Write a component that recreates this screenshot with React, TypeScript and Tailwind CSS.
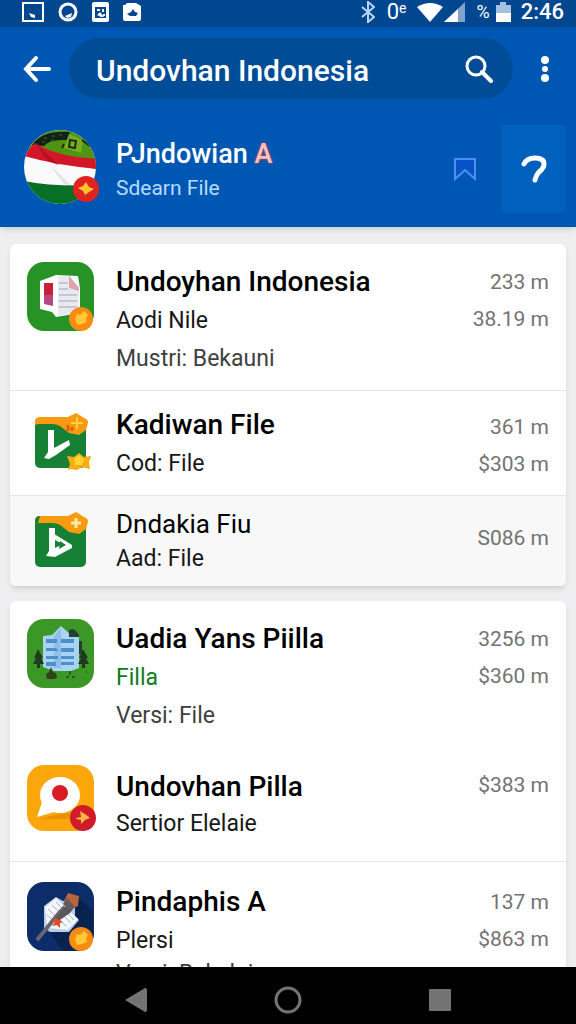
import type { ReactNode } from "react";
import clsx from "clsx";

interface FileRow {
  title: string;
  lines: string[];
  amounts: string[];
  icon: ReactNode;
  className: string;
  iconClassName?: string;
  bodyClassName?: string;
  titleClassName?: string;
  amountsClassName?: string;
  accent?: boolean;
}

const Coin = () => (
  <g>
    <circle cx="54" cy="57" r="12" fill="#f98a12" />
    <path d="M48 57l2-5 3 1 4-4 4 4-2 3 1 4-5 2-5 1z" fill="#ffc935" />
  </g>
);

const DocumentIcon = () => (
  <svg width="68" height="70" viewBox="0 0 68 70" aria-hidden="true">
    <rect width="67" height="69" rx="17" fill="#279327" />
    <path d="M13 19l16-6 22 1 2 12v25l-24 4-4-5-12-3z" fill="#fff" />
    <path d="M17 21h9v23l-9-2z" fill="#b54a80" />
    <path d="M17 21h9v12h-9z" fill="#c9213b" />
    <path d="M31 14h12l9 11v26l-21 3z" fill="#e9e9f0" />
    <path d="M42 14l10 12v3l-10-3z" fill="#dba4ac" />
    <path d="M32 21h9M32 27h9M32 33h18M32 39h18M32 45h18" stroke="#c4c6d4" strokeWidth="2" />
    <Coin />
  </svg>
);

const FolderIcon = ({ closed }: { closed?: boolean }) => (
  <svg width="66" height="62" viewBox="0 0 66 62" aria-hidden="true">
    <rect x="8" y="5" width="51" height="50" rx="5" fill="#168034" />
    <path d="M8 12V9q0-5 5-5h28l8-4 8 5q4 1 4 5l-2 7-7 5-10-2-9-7q-3-2-8-2H11z" fill="#f99b10" />
    {closed ? (
      <>
        <path d="M8 12V9q0-5 5-5l-2 7z" fill="#168034" />
        <path d="M22 16h6v20l8-4-8-4-4-8 21 13v3L28 45l-9-1 3-5z" fill="#fff" />
        <path d="M33 29l6 4-7 4z" fill="#168034" />
        <path d="M49 6v10M44 11h10" stroke="#ffe9a8" strokeWidth="3" />
      </>
    ) : (
      <>
        <path d="M21 17h6v18l15-8 1 5-14 10-7 4-5-1 4-6z" fill="#fff" />
        <path d="M50 4v12M44 10h12" stroke="#ffd044" strokeWidth="2" />
        <path d="M41 12v6M45 14v4" stroke="#dc6210" strokeWidth="3" />
        <path d="M40 43l7 1 5-4 5 4 7-1-2 6 1 7-8-2-5 3-6-1-3 1 2-6z" fill="#f9ac13" />
        <path d="M47 46l5-4 5 5-2 5h-7z" fill="#ffd52f" />
      </>
    )}
  </svg>
);

const BuildingIcon = () => (
  <svg width="68" height="70" viewBox="0 0 68 70" aria-hidden="true">
    <rect width="67" height="69" rx="17" fill="#3b9827" />
    <path d="M16 17l9-1 9-9 10 9 8 1v32l-8 3H27l-11-4z" fill="#a9d3f2" />
    <path d="M27 17l7-8v40h-7z" fill="#8dbfe8" />
    <path
      d="M19 20h11v4H19zM34 20h13v4H34zM19 29h10l3 3H19zM34 29h13v4H34zM19 37h12v3H19zM34 37h13v3H34zM19 43h10v4H19zM34 43h13v3H34z"
      fill="#4d8fcb"
    />
    <path d="M42 11l4-1 3 2 3 4v2H42zM52 22h3v13h-3z" fill="#243f31" />
    <path
      d="M11 30l-4 9h2l-3 6h4v4h3v-4h4l-3-6h2zM56 30l-4 9h2l-3 6h4v4h3v-4h4l-3-6h2z"
      fill="#203a1d"
    />
    <path d="M24 48l2 5 3 1 1 5-3 1h-7l-1-5 3-2z" fill="#31431c" />
    <path d="M43 52v4M39 58h3M45 58h3M59 53h1" stroke="#245f1c" strokeWidth="2" />
  </svg>
);

const ChatIcon = () => (
  <svg width="70" height="70" viewBox="0 0 70 70" aria-hidden="true">
    <rect width="67" height="66" rx="17" fill="#fba70b" />
    <path d="M12 54l17-4 23-4-6 8z" fill="#e99000" />
    <ellipse cx="33" cy="30" rx="20" ry="18" fill="#fff" />
    <path d="M15 37l-5 15 17-5z" fill="#fff" />
    <circle cx="33" cy="28" r="8" fill="#d91d27" />
    <circle cx="56" cy="53" r="13" fill="#cf1b2a" />
    <path d="M49 53l5-1-1-6 5 3 5 4-5 2-4 4 0-4-5-1z" fill="#ffb545" />
  </svg>
);

const PenIcon = () => (
  <svg width="68" height="70" viewBox="0 0 68 70" aria-hidden="true">
    <rect width="67" height="69" rx="17" fill="#0c2d6a" />
    <path d="M49 13l17 16v23q0 17-17 17H36l-13-18z" fill="#092350" />
    <path d="M17 24l12-9 7 4 12-3v18l4 4-10 12H23l-6-4z" fill="#b9cae1" />
    <path d="M18 25l11-9 22 21-10 11-21-2z" fill="#f3f6fc" />
    <path d="M21 27l18 17M25 23l19 18M29 20l18 18M20 33l12 11" stroke="#a7b1c5" strokeWidth="1" />
    <path d="M10 58L32 31l6-6" stroke="#66656e" strokeWidth="4" />
    <path d="M28 37l11-13 10-1-6 8-13 9z" fill="#59565c" />
    <path d="M37 19l4-8 11 3-1 10-7 3z" fill="#ba643b" />
    <path d="M36 22l4-6 8 9-5 4z" fill="#625b60" />
    <path d="M29 36l-4 2 3 2-3 4 5-1 3 3v-5l3-1z" fill="#dc4b25" />
    <Coin />
  </svg>
);

const firstGroup: FileRow[] = [
  {
    title: "Undoyhan Indonesia",
    lines: ["Aodi Nile", "Mustri: Bekauni"],
    amounts: ["233 m", "38.19 m"],
    icon: <DocumentIcon />,
    className: "border-b border-gray-200 pt-[18px] pb-3",
  },
  {
    title: "Kadiwan File",
    lines: ["Cod: File"],
    amounts: ["361 m", "$303 m"],
    icon: <FolderIcon />,
    className: "border-b border-gray-200 pt-3.5 pb-3",
    iconClassName: "pt-2",
    amountsClassName: "pt-1",
  },
  {
    title: "Dndakia Fiu",
    lines: ["Aad: File"],
    amounts: ["S086 m"],
    icon: <FolderIcon closed />,
    className: "bg-[#f8f8f9] pt-3 pb-2",
    iconClassName: "pt-1",
    titleClassName: "text-[26px] leading-8",
    amountsClassName: "pt-3",
  },
];

const secondGroup: FileRow[] = [
  {
    title: "Uadia Yans Piilla",
    lines: ["Filla", "Versi: File"],
    amounts: ["3256 m", "$360 m"],
    icon: <BuildingIcon />,
    className: "pt-[18px] pb-3.5",
    accent: true,
  },
  {
    title: "Undovhan Pilla",
    lines: ["Sertior Elelaie"],
    amounts: ["$383 m"],
    icon: <ChatIcon />,
    className: "border-b border-gray-200 pt-4 pb-[18px]",
    bodyClassName: "pt-1",
    titleClassName: "text-[28px] leading-9 font-medium",
  },
  {
    title: "Pindaphis A",
    lines: ["Plersi", "Versi: Bekalai"],
    amounts: ["137 m", "$863 m"],
    icon: <PenIcon />,
    className: "pt-5 pb-4",
    bodyClassName: "[&_p:last-child]:leading-7",
  },
];

const FileItem = ({
  title,
  lines,
  amounts,
  icon,
  className,
  iconClassName,
  bodyClassName,
  titleClassName = "text-[28px] leading-10 font-medium",
  amountsClassName = "pt-0.5",
  accent,
}: FileRow) => (
  <li className={clsx("flex px-[17px]", className)}>
    <div className={clsx("w-[89px] shrink-0", iconClassName)}>{icon}</div>
    <div className={clsx("min-w-0 flex-1", bodyClassName)}>
      <h2 className={clsx("text-black", titleClassName)}>{title}</h2>
      {lines.map((line, index) => (
        <p
          key={line}
          className={clsx(
            "text-[23px] leading-[38px]",
            index > 0 && "text-neutral-700",
            index === 0 && (accent ? "text-[#0b7d1c]" : "text-neutral-900")
          )}
        >
          {line}
        </p>
      ))}
    </div>
    <div
      className={clsx(
        "shrink-0 text-right text-[21px] leading-[37px] text-neutral-500",
        amountsClassName
      )}
    >
      {amounts.map((amount) => (
        <p key={amount}>{amount}</p>
      ))}
    </div>
  </li>
);

const FileCard = ({ rows }: { rows: FileRow[] }) => (
  <ul className="shrink-0 overflow-hidden rounded-md bg-white shadow-md">
    {rows.map((row) => (
      <FileItem key={row.title} {...row} />
    ))}
  </ul>
);

const StatusBar = () => (
  <div className="flex h-[27px] items-center justify-between bg-[#00478f] pr-3 pb-1 pl-[22px] text-white">
    <div className="flex items-center gap-[14px]">
      <svg width="22" height="20" viewBox="0 0 22 20" aria-hidden="true">
        <rect x="1" y="1" width="20" height="18" fill="none" stroke="currentColor" strokeWidth="2" />
        <path d="M7 11l6 2v3l-4-1z" fill="currentColor" />
      </svg>
      <svg width="20" height="20" viewBox="0 0 20 20" aria-hidden="true">
        <ellipse cx="10" cy="10" rx="8" ry="8" fill="none" stroke="currentColor" strokeWidth="3" />
        <path d="M7 14l7-3-1 4-4 1z" fill="currentColor" />
      </svg>
      <svg width="17" height="20" viewBox="0 0 17 20" aria-hidden="true">
        <rect width="17" height="20" rx="2" fill="currentColor" />
        <path d="M3 5h11v11H3z" fill="#00478f" />
        <path d="M5 7h3v2H5zM10 7h2v3h-2zM5 13l3-3 4 5H9zM11 12h2v2h-2z" fill="currentColor" />
      </svg>
      <svg width="19" height="20" viewBox="0 0 19 20" aria-hidden="true">
        <path d="M0 3h2l2-2h9l5 3v13q0 2-2 2H2q-2 0-2-2z" fill="currentColor" />
        <path d="M4 12l4-2 2-3 2 3 3 1-2 3H7z" fill="#00478f" />
      </svg>
    </div>
    <div className="flex items-center">
      <svg width="14" height="22" viewBox="0 0 14 22" className="mr-3" aria-hidden="true">
        <path d="M1 6l12 10-6 5V1l6 5L1 16" fill="none" stroke="#b9d6f4" strokeWidth="2" />
      </svg>
      <span className="text-[22px] leading-6">0</span>
      <span className="mr-2.5 self-start text-sm leading-4">e</span>
      <svg width="52" height="20" viewBox="0 0 52 20" className="mr-2" aria-hidden="true">
        <path d="M0 5Q13-3 26 5L13 20z" fill="currentColor" />
        <path d="M27 20L48 0v20z" fill="#7fa3cf" />
        <path d="M27 20L41 7v13z" fill="currentColor" />
      </svg>
      <span className="mr-1.5 text-lg leading-6">%</span>
      <svg width="15" height="20" viewBox="0 0 15 20" className="mr-2.5" aria-hidden="true">
        <path d="M0 3h4V0h6v3h5v17H0z" fill="#a5bfdf" />
        <path d="M0 11h15v9H0z" fill="currentColor" />
      </svg>
      <span className="text-[22px] leading-6 font-medium">2:46</span>
    </div>
  </div>
);

const Header = () => (
  <header className="z-10 shrink-0 bg-[#0057b3] text-white shadow-md">
    <StatusBar />
    <div className="flex items-center pt-[11px] pr-[23px]">
      <button type="button" aria-label="Back" className="flex w-[69px] shrink-0 justify-center pl-1">
        <svg width="28" height="28" viewBox="0 0 28 28" aria-hidden="true">
          <path
            d="M26 14H3M13 3L3 14l10 11"
            fill="none"
            stroke="currentColor"
            strokeWidth="4"
            strokeLinecap="round"
          />
        </svg>
      </button>
      <div className="flex h-[61px] min-w-0 flex-1 items-center rounded-full bg-[#004c97] pr-5 pl-[27px]">
        <input
          type="text"
          aria-label="Search files"
          defaultValue="Undovhan Indonesia"
          className="min-w-0 flex-1 bg-transparent pt-1 text-[30px] font-medium outline-none"
        />
        <button type="button" aria-label="Search">
          <svg width="28" height="28" viewBox="0 0 28 28" aria-hidden="true">
            <circle cx="11" cy="11" r="9" fill="none" stroke="currentColor" strokeWidth="3" />
            <path d="M17 17l9 9" stroke="currentColor" strokeWidth="4" strokeLinecap="round" />
          </svg>
        </button>
      </div>
      <button type="button" aria-label="More options" className="ml-6 shrink-0">
        <svg width="16" height="28" viewBox="0 0 16 28" aria-hidden="true">
          <circle cx="8" cy="5" r="4" fill="currentColor" />
          <circle cx="8" cy="14" r="3" fill="currentColor" />
          <circle cx="8" cy="23" r="4" fill="currentColor" />
        </svg>
      </button>
    </div>
    <div className="flex items-center pt-[26px] pr-[10px] pb-[14px] pl-6">
      <svg width="76" height="78" viewBox="0 0 76 78" className="shrink-0" aria-hidden="true">
        <clipPath id="avatar">
          <ellipse cx="36" cy="37" rx="36" ry="37" />
        </clipPath>
        <g clipPath="url(#avatar)">
          <path d="M0 0h76v76H0z" fill="#fafafa" />
          <path d="M0 0h76v40Q43 34 0 20z" fill="#4f9412" />
          <path d="M8 15Q18 0 46 2l-3 8Q25 9 20 16z" fill="#132219" />
          <path d="M20 8h3M28 6h3M35 5h3M18 12h3M27 10h3" stroke="#456039" strokeWidth="1" />
          <path d="M40 18l5-14 14 6-2 13z" fill="#75ae20" />
          <path
            d="M46 10l6 1-1 7-6-1zM40 14l-2 4M58 10l8 6"
            stroke="#202b12"
            strokeWidth="2"
            fill="none"
          />
          <path d="M0 24l11-11q21 14 65 16v10Q35 36 0 26z" fill="#d31729" />
          <path d="M12 14l23 21L24 31z" fill="#b90f22" />
          <path d="M25 34l23 22-8-2z" fill="#e5e5e7" />
          <path d="M0 51q30 6 76 4v23H0z" fill="#087026" />
        </g>
        <circle cx="62" cy="59" r="13" fill="#df2323" />
        <path d="M62 52l3 5 5 2-5 3-4 3-2-4-5-3 5-2z" fill="#ffc32b" />
      </svg>
      <div className="ml-4 min-w-0 flex-1 pt-0.5">
        <h1 className="text-[27px] leading-9 font-medium">
          PJndowian <span className="text-[#ffc0b8] [text-shadow:0_0_3px_#f04040]">A</span>
        </h1>
        <p className="text-[21px] leading-8 text-[#b5dcff]">Sdearn File</p>
      </div>
      <button type="button" aria-label="Bookmark" className="mr-6 shrink-0">
        <svg width="24" height="24" viewBox="0 0 24 24" aria-hidden="true">
          <path d="M2 22V2h20v20l-10-9z" fill="#0753c6" stroke="#4f8ef0" strokeWidth="2" />
        </svg>
      </button>
      <button
        type="button"
        aria-label="Help"
        className="flex h-[88px] w-[65px] shrink-0 items-center justify-center rounded bg-[#0060be]"
      >
        <svg width="26" height="28" viewBox="0 0 26 28" aria-hidden="true">
          <path
            d="M3 9Q6 3 14 3q9 0 9 6 0 4-5 8-3 3-4 8"
            fill="none"
            stroke="currentColor"
            strokeWidth="5"
            strokeLinecap="round"
          />
        </svg>
      </button>
    </div>
  </header>
);

const NavigationBar = () => (
  <nav className="flex h-[57px] shrink-0 items-center justify-center gap-[126px] bg-black pt-2 text-[#737373]">
    <button type="button" aria-label="Go back">
      <svg width="24" height="26" viewBox="0 0 24 26" aria-hidden="true">
        <path d="M1 13L21 1q2 0 2 2v20q0 2-2 2z" fill="currentColor" />
      </svg>
    </button>
    <button type="button" aria-label="Home">
      <svg width="28" height="28" viewBox="0 0 28 28" aria-hidden="true">
        <circle cx="14" cy="14" r="12" fill="none" stroke="currentColor" strokeWidth="3" />
      </svg>
    </button>
    <button type="button" aria-label="Recent apps">
      <svg width="24" height="24" viewBox="0 0 24 24" aria-hidden="true">
        <rect x="1" y="1" width="22" height="22" rx="1" fill="currentColor" />
      </svg>
    </button>
  </nav>
);

export default function App() {
  return (
    <div className="flex h-dvh flex-col bg-[#efeff1] font-[Roboto,sans-serif]">
      <Header />
      <main className="flex min-h-0 flex-1 flex-col gap-[15px] overflow-hidden px-[10px] pt-[17px]">
        <FileCard rows={firstGroup} />
        <FileCard rows={secondGroup} />
      </main>
      <NavigationBar />
    </div>
  );
}
